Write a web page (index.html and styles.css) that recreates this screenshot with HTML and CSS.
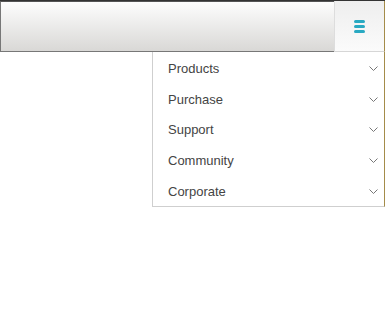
FILE: index.html
```html
<!DOCTYPE html>
<html lang="en">
<head>
    <meta charset="UTF-8">
    <meta name="viewport" content="width=device-width, initial-scale=1.0">
    <title>Site Menu</title>
    <link rel="stylesheet" href="styles.css">
</head>
<body>
    <div class="site-header">
        <div class="header-bar"></div>
        <button class="menu-toggle" aria-label="Menu">
            <span></span><span></span><span></span>
        </button>
    </div>

    <nav class="nav-menu">
        <div class="nav-item"><span>Products</span><svg class="chevron" viewBox="0 0 9 5"><polyline points="0.5,0.5 4.5,4.5 8.5,0.5"/></svg></div>
        <div class="nav-item"><span>Purchase</span><svg class="chevron" viewBox="0 0 9 5"><polyline points="0.5,0.5 4.5,4.5 8.5,0.5"/></svg></div>
        <div class="nav-item"><span>Support</span><svg class="chevron" viewBox="0 0 9 5"><polyline points="0.5,0.5 4.5,4.5 8.5,0.5"/></svg></div>
        <div class="nav-item"><span>Community</span><svg class="chevron" viewBox="0 0 9 5"><polyline points="0.5,0.5 4.5,4.5 8.5,0.5"/></svg></div>
        <div class="nav-item"><span>Corporate</span><svg class="chevron" viewBox="0 0 9 5"><polyline points="0.5,0.5 4.5,4.5 8.5,0.5"/></svg></div>
    </nav>
</body>
</html>
```

FILE: styles.css
```css
body {
    margin: 0;
    font-family: "Liberation Sans", Arial, sans-serif;
    background: #fff;
}

.site-header {
    display: flex;
    height: 52px;
    border-top: 1px solid #333;
    box-sizing: border-box;
}

.header-bar {
    flex: 1;
    border-top: 1px solid #555;
    border-left: 1px solid #777;
    border-bottom: 1px solid #777;
    background: linear-gradient(to bottom, #fdfdfd, #d9d8d6);
}

.menu-toggle {
    width: 51px;
    padding: 0;
    border: none;
    border-left: 1px solid #ddd;
    border-bottom: 1px solid #d6d6d6;
    border-right: 1px solid #a48c4a;
    background: linear-gradient(to bottom, #eeeeee, #fbfbfb);
    display: flex;
    flex-direction: column;
    align-items: center;
    justify-content: center;
    gap: 2px;
    cursor: pointer;
}

.menu-toggle span {
    display: block;
    width: 11px;
    height: 3px;
    border-radius: 2px;
    background: #29a9c2;
}

.nav-menu {
    width: 233px;
    margin-left: auto;
    background: #fff;
    border-left: 1px solid #cfcfcf;
    border-bottom: 1px solid #cfcfcf;
    border-right: 1px solid #a48c4a;
    box-sizing: border-box;
}

.nav-item {
    display: flex;
    align-items: center;
    justify-content: space-between;
    height: 30.8px;
    padding: 2px 6px 0 15px;
    box-sizing: border-box;
    font-size: 13px;
    color: #444;
}

.chevron {
    width: 9px;
    height: 5px;
    fill: none;
    stroke: #777;
    stroke-width: 1;
}
```
